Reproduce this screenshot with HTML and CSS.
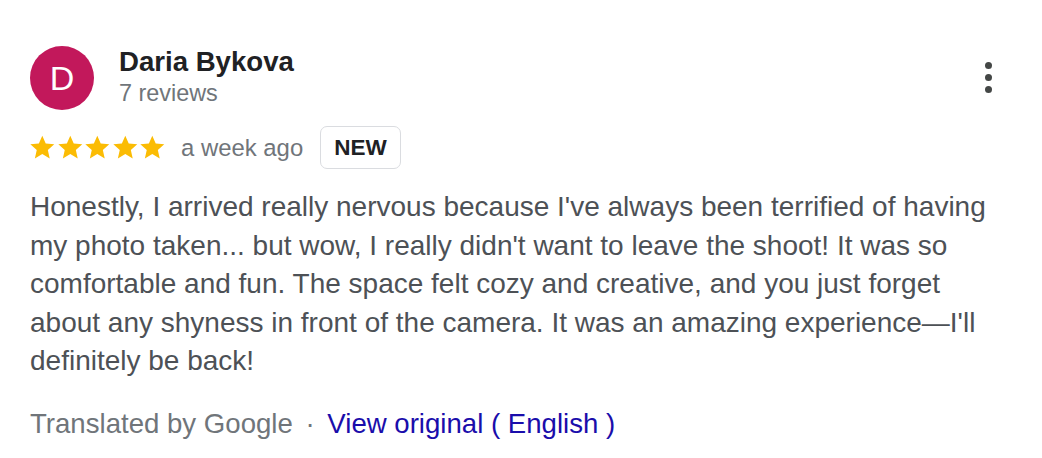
FILE: index.html
```html
<!DOCTYPE html>
<html lang="en">
<head>
<meta charset="utf-8">
<title>Review</title>
<link rel="stylesheet" href="styles.css">
</head>
<body>
<div class="review">
  <div class="header">
    <div class="avatar">D</div>
    <div class="author">
      <div class="name">Daria Bykova</div>
      <div class="count">7 reviews</div>
    </div>
    <div class="menu" aria-label="More">
      <span class="dot"></span><span class="dot"></span><span class="dot"></span>
    </div>
  </div>
  <div class="meta">
    <div class="stars">
      <svg viewBox="0 0 24 24" class="star"><path d="M12 1.5l3.1 7.1 7.7.7-5.8 5.1 1.7 7.6L12 18l-6.7 4 1.7-7.6L1.2 9.3l7.7-.7z"/></svg>
      <svg viewBox="0 0 24 24" class="star"><path d="M12 1.5l3.1 7.1 7.7.7-5.8 5.1 1.7 7.6L12 18l-6.7 4 1.7-7.6L1.2 9.3l7.7-.7z"/></svg>
      <svg viewBox="0 0 24 24" class="star"><path d="M12 1.5l3.1 7.1 7.7.7-5.8 5.1 1.7 7.6L12 18l-6.7 4 1.7-7.6L1.2 9.3l7.7-.7z"/></svg>
      <svg viewBox="0 0 24 24" class="star"><path d="M12 1.5l3.1 7.1 7.7.7-5.8 5.1 1.7 7.6L12 18l-6.7 4 1.7-7.6L1.2 9.3l7.7-.7z"/></svg>
      <svg viewBox="0 0 24 24" class="star"><path d="M12 1.5l3.1 7.1 7.7.7-5.8 5.1 1.7 7.6L12 18l-6.7 4 1.7-7.6L1.2 9.3l7.7-.7z"/></svg>
    </div>
    <span class="date">a week ago</span>
    <span class="badge">NEW</span>
  </div>
  <p class="text">Honestly, I arrived really nervous because I've always been terrified of having my photo taken... but wow, I really didn't want to leave the shoot! It was so comfortable and fun. The space felt cozy and creative, and you just forget about any shyness in front of the camera. It was an amazing experience—I'll definitely be back!</p>
  <div class="footer">
    <span class="translated">Translated by Google</span>
    <span class="sep">·</span>
    <a class="original" href="#">View original ( English )</a>
  </div>
</div>
</body>
</html>
```
FILE: styles.css
```css
html, body {
  margin: 0;
  padding: 0;
  background: #ffffff;
}
body {
  font-family: "Liberation Sans", Arial, sans-serif;
}
.review {
  padding: 46px 30px 0 30px;
  width: 1042px;
  box-sizing: border-box;
}
.header {
  display: flex;
  align-items: flex-start;
}
.avatar {
  width: 64px;
  height: 64px;
  border-radius: 50%;
  background: #c2185b;
  color: #ffffff;
  font-size: 34px;
  display: flex;
  align-items: center;
  justify-content: center;
  flex: none;
}
.author {
  margin-left: 25px;
  flex: 1;
  padding-top: 0;
}
.name {
  font-size: 27.6px;
  font-weight: bold;
  color: #202124;
  line-height: 32px;
}
.count {
  font-size: 23.4px;
  color: #70757a;
  line-height: 30px;
}
.menu {
  display: flex;
  flex-direction: column;
  gap: 5px;
  margin-top: 16px;
  margin-right: 20px;
}
.dot {
  width: 7px;
  height: 7px;
  border-radius: 50%;
  background: #444746;
}
.meta {
  display: flex;
  align-items: center;
  margin-top: 16px;
  height: 43px;
}
.stars {
  display: flex;
  gap: 1px;
  margin-left: -1px;
}
.star {
  width: 26.6px;
  height: 26.6px;
  fill: #fbbc04;
}
.date {
  margin-left: 15px;
  font-size: 23.9px;
  color: #70757a;
}
.badge {
  margin-left: 17px;
  box-sizing: border-box;
  height: 43px;
  padding: 0 13px;
  border: 1.5px solid #dadce0;
  border-radius: 7px;
  font-size: 22.5px;
  font-weight: bold;
  color: #202124;
  display: flex;
  align-items: center;
}
.text {
  margin: 19px 0 0 0;
  font-size: 28px;
  line-height: 38.5px;
  color: #4d5156;
  width: 975px;
}
.footer {
  margin-top: 28px;
  font-size: 27.6px;
  line-height: 30px;
}
.translated {
  color: #70757a;
}
.sep {
  color: #70757a;
  margin: 0 5px;
}
.original {
  color: #1a0dab;
  text-decoration: none;
}
```
